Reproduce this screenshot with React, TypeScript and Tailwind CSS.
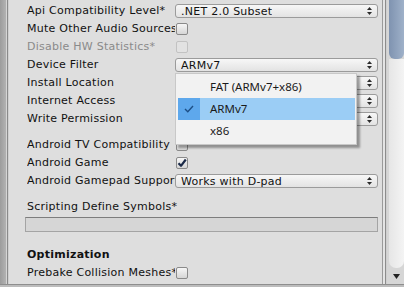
import React from "react";

const font = { fontFamily: '"DejaVu Sans", Verdana, sans-serif' };

function Arrows() {
  return (
    <svg width="5" height="8" viewBox="0 0 5 8" className="shrink-0">
      <path d="M2.5 0 L5 3 L0 3 Z" fill="#2b2b2b" />
      <path d="M2.5 8 L5 5 L0 5 Z" fill="#2b2b2b" />
    </svg>
  );
}

function Popup({ value }: { value: string }) {
  return (
    <div className="flex h-[14px] w-[203px] items-center justify-between rounded-[3px] border border-[#9b9b9b] bg-gradient-to-b from-[#f7f7f7] to-[#e3e3e3] pl-[5px] pr-[5px] text-[11px] leading-none text-[#111]">
      <span className="overflow-hidden whitespace-nowrap">{value}</span>
      <Arrows />
    </div>
  );
}

function Check({ checked, disabled }: { checked?: boolean; disabled?: boolean }) {
  return (
    <div
      className={
        disabled
          ? "ml-[1px] flex h-[12px] w-[12px] items-center justify-center rounded-[2px] border border-[#c2c2c2] bg-[#e2e2e2]"
          : "ml-[1px] flex h-[12px] w-[12px] items-center justify-center rounded-[2px] border border-[#8a8a8a] bg-gradient-to-b from-[#f6f6f6] to-[#d6d6d6]"
      }
    >
      {checked && (
        <svg width="10" height="10" viewBox="0 0 10 10">
          <path d="M1.5 5.2 L4 7.8 L8.8 1.5" fill="none" stroke="#1b2a48" strokeWidth="2.2" strokeLinejoin="round" />
        </svg>
      )}
    </div>
  );
}

function Row({ label, children, muted }: { label: string; children?: React.ReactNode; muted?: boolean }) {
  return (
    <div className="flex h-[18px] items-center">
      <div className={muted ? "w-[148px] shrink-0 overflow-hidden whitespace-nowrap text-[#8a8a8a]" : "w-[148px] shrink-0 overflow-hidden whitespace-nowrap"}>
        {label}
      </div>
      {children}
    </div>
  );
}

const menu = [
  { label: "FAT (ARMv7+x86)", active: false },
  { label: "ARMv7", active: true },
  { label: "x86", active: false },
];

export default function App() {
  return (
    <div className="relative flex h-[287px] w-[404px] flex-col overflow-hidden bg-[#dedede] text-[11px] tracking-[0.25px] text-[#111]" style={font}>
      <div className="flex min-h-0 flex-1">
        {/* left frame */}
        <div className="flex shrink-0">
          <div className="w-[6px] bg-gradient-to-r from-[#9c9c9c] to-[#b2b2b2]" />
          <div className="w-[1px] bg-[#d4d4d4]" />
          <div className="w-[1px] bg-[#8a8a8a]" />
          <div className="w-[1px] bg-[#cfcfcf]" />
        </div>

        {/* inspector body */}
        <div className="flex w-[373px] shrink-0 flex-col pl-[18px] pt-[2px]">
          <Row label="Api Compatibility Level*">
            <Popup value=".NET 2.0 Subset" />
          </Row>
          <Row label="Mute Other Audio Sources">
            <Check />
          </Row>
          <Row label="Disable HW Statistics*" muted>
            <Check disabled />
          </Row>
          <Row label="Device Filter">
            <Popup value="ARMv7" />
          </Row>
          <Row label="Install Location">
            <Popup value="Prefer External" />
          </Row>
          <Row label="Internet Access">
            <Popup value="Auto" />
          </Row>
          <Row label="Write Permission">
            <Popup value="Internal" />
          </Row>
          <div className="h-[8px]" />
          <Row label="Android TV Compatibility">
            <Check />
          </Row>
          <Row label="Android Game">
            <Check checked />
          </Row>
          <Row label="Android Gamepad Support Level">
            <Popup value="Works with D-pad" />
          </Row>
          <div className="h-[8px]" />
          <div className="flex h-[18px] items-center whitespace-nowrap">Scripting Define Symbols*</div>
          <div className="-ml-[2px] mt-[1px] h-[15px] w-[353px] border border-[#a4a4a4] border-t-[#7d7d7d] bg-[#d6d6d6]" />
          <div className="h-[14px]" />
          <div className="flex h-[18px] items-center font-bold">Optimization</div>
          <Row label="Prebake Collision Meshes*">
            <Check />
          </Row>
        </div>

        {/* right frame + scrollbar */}
        <div className="flex flex-1">
          <div className="w-[1px] bg-[#9a9a9a]" />
          <div className="w-[2px] bg-[#e4e4e4]" />
          <div className="w-[1px] bg-[#8c8c8c]" />
          <div className="w-[1px] bg-[#cfcfcf]" />
          <div className="flex flex-1 flex-col bg-[#d6d6d6] pl-[2px]">
            <div className="h-[59px] rounded-b-[6px] bg-gradient-to-r from-[#7f93b0] to-[#9fb1c9]" />
            <div className="flex-1 rounded-b-[7px] bg-gradient-to-r from-[#e6e6e6] to-[#f4f4f4]" />
            <div className="flex h-[16px] items-center justify-center">
              <svg width="7" height="5" viewBox="0 0 7 5">
                <path d="M0 0 L7 0 L3.5 5 Z" fill="#222" />
              </svg>
            </div>
          </div>
        </div>
      </div>

      {/* bottom frame */}
      <div className="h-[1px] bg-[#8e8e8e]" />
      <div className="h-[2px] bg-[#bcbcbc]" />

      {/* open dropdown menu */}
      <div
        className="absolute left-[175px] top-[73px] w-[182px] border border-[#c8c8c8] bg-[#f2f2f2] py-[2px] pl-[2px] pr-[1px] tracking-normal shadow-[3px_3px_2px_rgba(0,0,0,0.35)]"
        style={{ fontFamily: '"Noto Sans", "Open Sans", sans-serif' }}
      >
        {menu.map((m) => (
          <div key={m.label} className={m.active ? "flex h-[22px] items-center bg-[#9bcdf5]" : "flex h-[22px] items-center"}>
            <div className={m.active ? "flex h-full w-[22px] items-center justify-center bg-[#5ea8ec]" : "h-full w-[22px]"}>
              {m.active && (
                <svg width="10" height="8" viewBox="0 0 10 8">
                  <path d="M1 4 L3.8 6.8 L9 1" fill="none" stroke="#1d4f86" strokeWidth="1.4" />
                </svg>
              )}
            </div>
            <span className="pl-[10px] text-[11.5px] text-[#1a1a1a]">{m.label}</span>
          </div>
        ))}
      </div>
    </div>
  );
}
